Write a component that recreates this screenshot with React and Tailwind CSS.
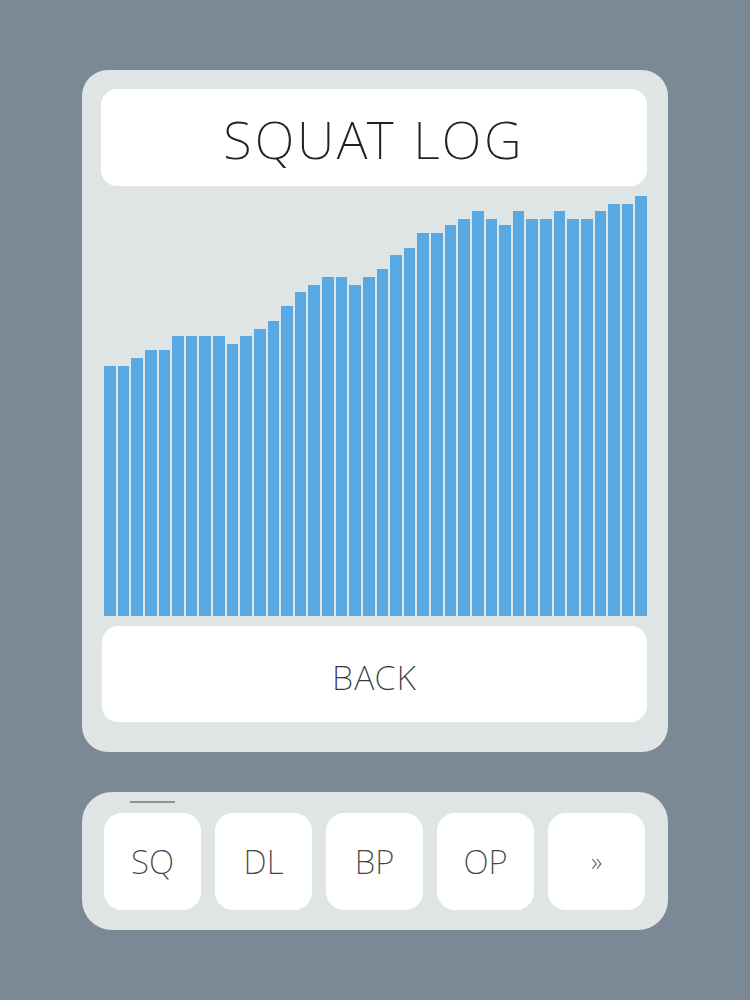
import React from "react";

const tops = [366,366,358,350,350,336,336,336,336,344,336,329,321,306,292,285,277,277,285,277,269,255,248,233,233,225,219,211,219,225,211,219,219,211,219,219,211,204,204,196];

export default function App() {
  const font = { fontFamily: '"Noto Sans", "Open Sans", sans-serif' };
  return (
    <div className="w-[750px] h-[1000px] bg-[#7b8997] pt-[70px] pl-[82px]" style={font}>
      <div className="w-[586px] h-[682px] bg-[#dfe4e5] rounded-[26px] pt-[19px] pl-[19px] pr-[21px] flex flex-col">
        <div className="h-[97px] bg-white rounded-[16px] flex items-center justify-center">
          <span className="text-[52px] font-extralight text-[#222] tracking-[3px] leading-none pt-[2px]">SQUAT LOG</span>
        </div>
        <div className="h-[430px] flex items-end gap-[2px] pl-[3px] pb-[0px]">
          {tops.map((t, i) => (
            <div key={i} className="flex-1 bg-[#58a8e3]" style={{ height: 616 - t }} />
          ))}
        </div>
        <div className="mt-[10px] h-[96px] ml-[1px] bg-white rounded-[16px] flex items-center justify-center">
          <span className="text-[34px] font-extralight text-[#3a3a3a] tracking-[1px] leading-none pt-[5px]">BACK</span>
        </div>
      </div>
      <div className="mt-[40px] w-[586px] h-[138px] bg-[#dfe4e5] rounded-[30px] relative flex items-center pl-[22px] gap-[14px]">
        <div className="absolute left-[48px] top-[9px] w-[45px] h-[2px] bg-[#8a9499]" />
        {["SQ", "DL", "BP", "OP", "»"].map((l) => (
          <div key={l} className="w-[97px] h-[97px] bg-white rounded-[18px] flex items-center justify-center">
            <span className={`${l === "»" ? "text-[26px]" : "text-[33px]"} font-extralight text-[#444] leading-none`}>{l}</span>
          </div>
        ))}
      </div>
    </div>
  );
}
